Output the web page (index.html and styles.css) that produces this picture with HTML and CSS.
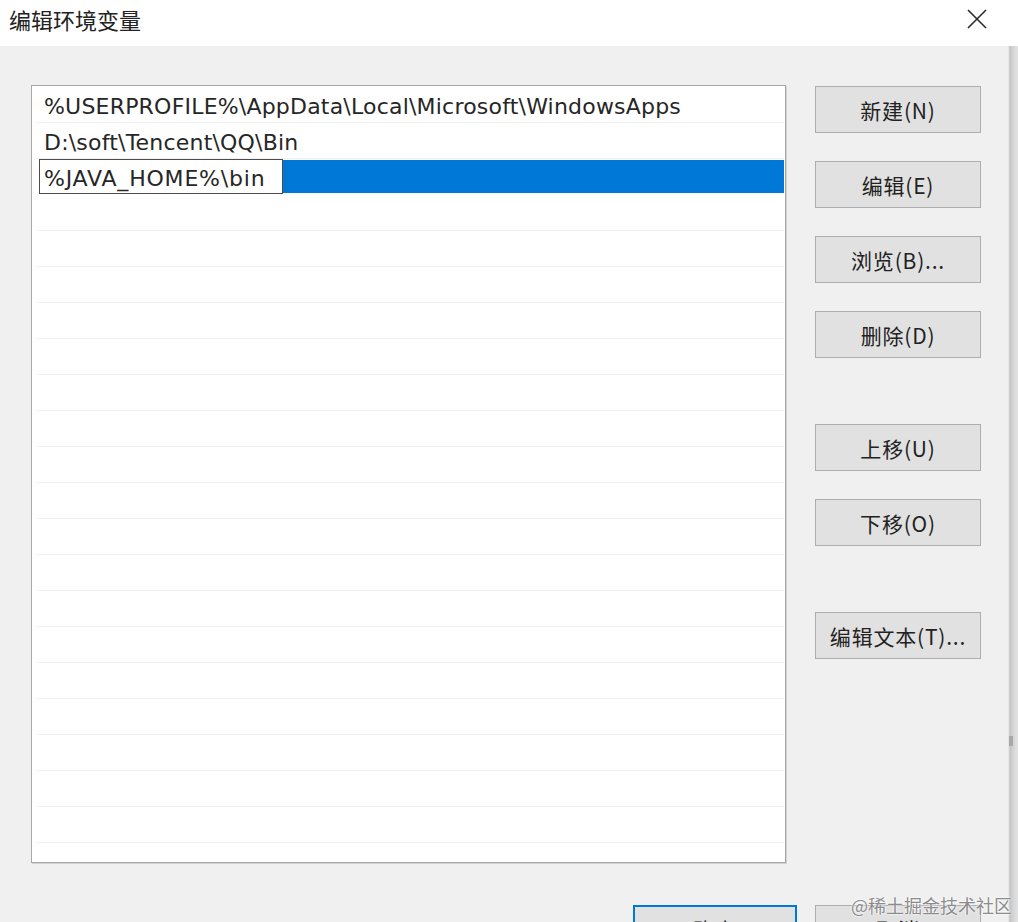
FILE: index.html
```html
<!DOCTYPE html>
<html lang="zh-CN">

<head>
    <meta charset="UTF-8">
    <title>编辑环境变量</title>
    <link rel="stylesheet" href="styles.css">
</head>

<body>
    <div class="titlebar">
        <span class="title">编辑环境变量</span>
        <svg class="close" width="22" height="22" viewBox="0 0 22 22">
            <path d="M2 2 L20 20 M20 2 L2 20" stroke="#2b2b2b" stroke-width="1.6" fill="none"/>
        </svg>
    </div>

    <div class="content">
        <div class="main">
            <div class="list">
                <div class="row">%USERPROFILE%\AppData\Local\Microsoft\WindowsApps</div>
                <div class="row">D:\soft\Tencent\QQ\Bin</div>
                <div class="row selected">
                    <span class="edit">%JAVA_HOME%\bin</span>
                </div>
                <div class="row"></div>
                <div class="row"></div>
                <div class="row"></div>
                <div class="row"></div>
                <div class="row"></div>
                <div class="row"></div>
                <div class="row"></div>
                <div class="row"></div>
                <div class="row"></div>
                <div class="row"></div>
                <div class="row"></div>
                <div class="row"></div>
                <div class="row"></div>
                <div class="row"></div>
                <div class="row"></div>
                <div class="row"></div>
                <div class="row"></div>
                <div class="row"></div>
                <div class="row"></div>
            </div>

            <div class="side">
                <button class="btn">新建(N)</button>
                <button class="btn">编辑(E)</button>
                <button class="btn">浏览(B)...</button>
                <button class="btn">删除(D)</button>
                <button class="btn gap">上移(U)</button>
                <button class="btn">下移(O)</button>
                <button class="btn gap">编辑文本(T)...</button>
            </div>
        </div>

        <div class="footer">
            <button class="btn ok">确定</button>
            <button class="btn">取消</button>
        </div>
        <span class="grip"></span>
    </div>

    <span class="watermark">@稀土掘金技术社区</span>
</body>

</html>
```

FILE: styles.css
```css
html {
    background: #f0f0f0;
}
body {
    margin: 0;
    width: 1018px;
    height: 922px;
    overflow: hidden;
    position: relative;
    font-family: "DejaVu Sans", "Noto Sans CJK SC", sans-serif;
    color: #1a1a1a;
}
.titlebar {
    height: 46px;
    background: #fff;
    display: flex;
    align-items: center;
    justify-content: space-between;
    padding: 0 30px 0 9px;
}
.title {
    font-family: "Noto Sans CJK SC", sans-serif;
    font-size: 22px;
    color: #222;
    margin-top: -8px;
}
.close {
    margin-top: -8px;
}
.content {
    position: relative;
    height: 876px;
    padding-top: 39px;
    box-sizing: border-box;
    background: linear-gradient(to right, #f0f0f0 1008px, #c4c4c4 1010px, #d4d4d4 1013px, #e4e4e4 1018px);
}
.main {
    display: flex;
    padding-left: 31px;
}
.list {
    width: 751px;
    height: 775px;
    border: 1px solid #a8a8a8;
    box-shadow: 1px 1px 0 #d2d2d2;
    background: #fff;
    padding: 1px 1px 0 1px;
    overflow: hidden;
}
.row {
    border-bottom: 1px solid #f1f1f1;
    margin-left: 3px;
    padding-left: 8px;
    padding-top: 3px;
    box-sizing: border-box;
    height: 36px;
    display: flex;
    align-items: center;
    font-size: 22px;
    letter-spacing: 0.2px;
    color: #262626;
    white-space: nowrap;
}
.row.selected {
    margin-left: 0;
    padding-left: 6px;
    padding-top: 0;
    height: 35px;
    margin-top: 1px;
    border-bottom: 2px solid #fff;
    background: linear-gradient(to right, #fff 250px, #0078d7 250px);
}
.edit {
    display: block;
    width: 238px;
    height: 33px;
    line-height: 37px;
    letter-spacing: 0.8px;
    border: 1px solid #4c4c4c;
    background: #fff;
    padding-left: 4px;
    margin-top: -1px;
    box-sizing: content-box;
}
.side {
    display: flex;
    flex-direction: column;
    gap: 28px;
    margin-left: 29px;
    padding-top: 1px;
}
.btn {
    width: 166px;
    height: 47px;
    background: #e1e1e1;
    border: 1px solid #adadad;
    font-family: "Noto Sans CJK SC", sans-serif;
    font-size: 21px;
    letter-spacing: 0.8px;
    color: #222;
    padding: 0;
}
.btn.gap {
    margin-top: 38px;
}
.footer {
    display: flex;
    gap: 18px;
    padding-left: 633px;
    margin-top: 42px;
}
.btn.ok {
    width: 164px;
    border: 2px solid #0078d7;
}
.grip {
    position: absolute;
    left: 1009px;
    top: 690px;
    width: 4px;
    height: 10px;
    background: #a8a8a8;
}
.watermark {
    position: absolute;
    right: 6px;
    bottom: 4px;
    font-family: "Noto Sans CJK SC", sans-serif;
    font-size: 18px;
    color: #8c8c8c;
    text-shadow: 0 0 2px #fff, 0 0 2px #fff;
}
```
